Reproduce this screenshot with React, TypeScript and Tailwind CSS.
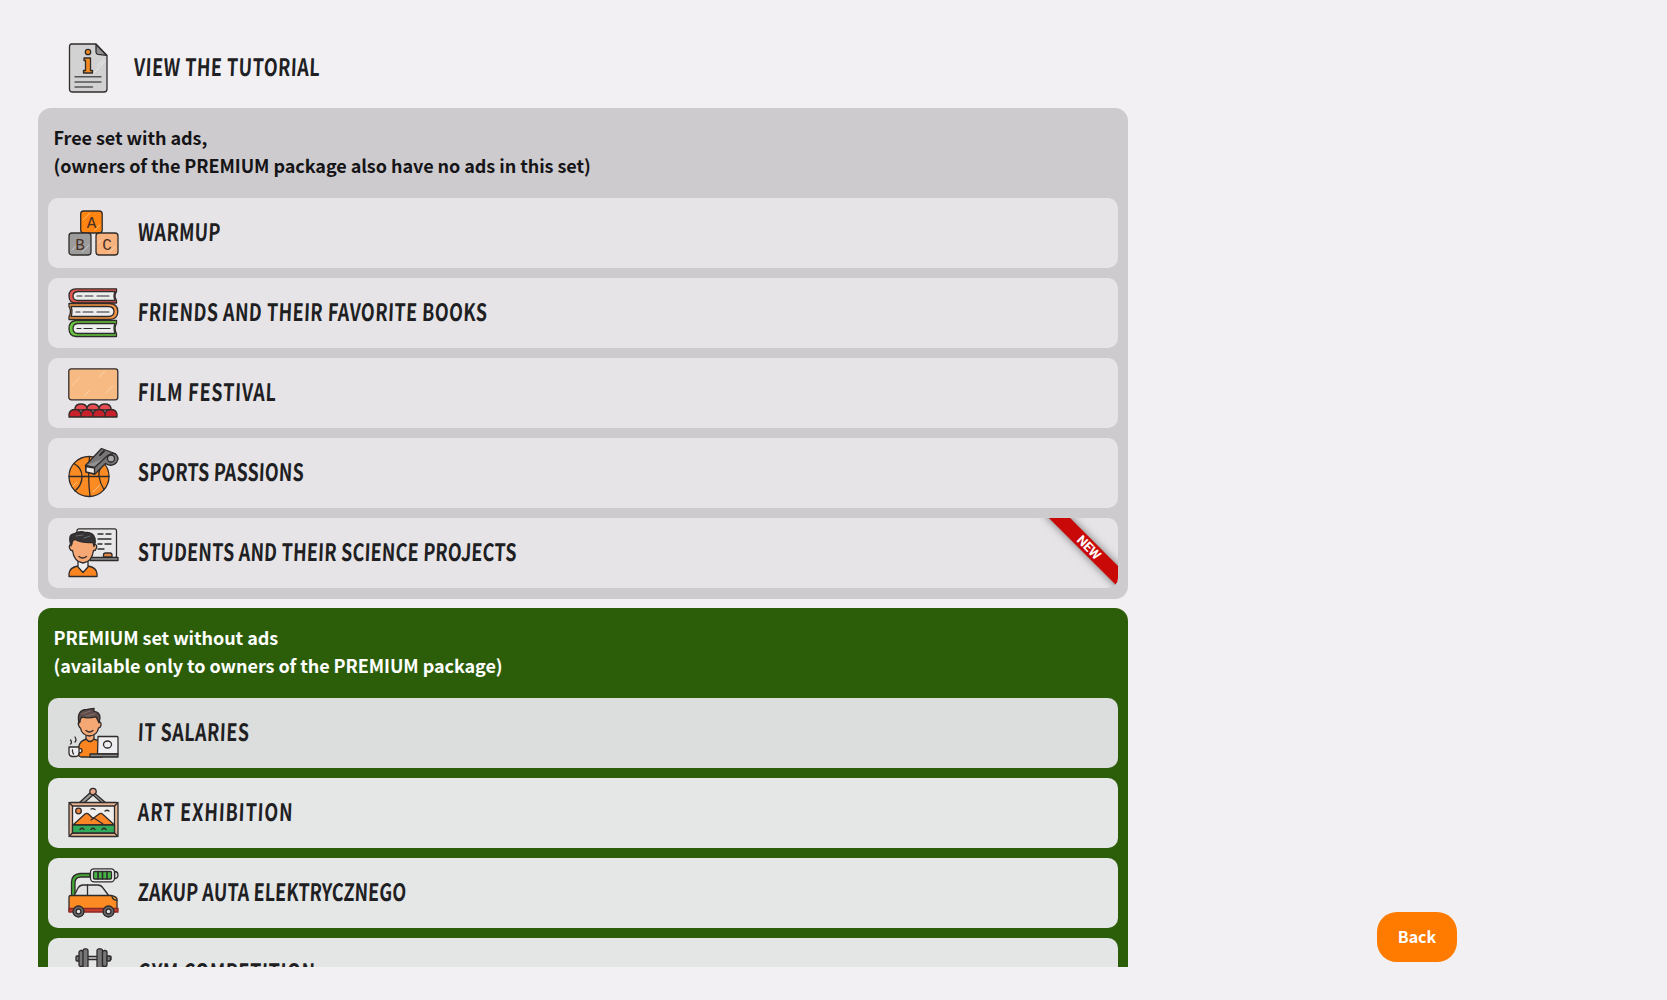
import type { ReactNode } from 'react';

interface LevelRow {
  title: string;
  tracking: string;
  icon: ReactNode;
  rowClass?: string;
  isNew?: boolean;
}

const INK = '#2f2b2b';

function Icon({ children }: { children: ReactNode }) {
  return (
    <svg
      viewBox="0 0 50 50"
      className="w-[50px] h-[50px] shrink-0 overflow-visible"
      fill="none"
      stroke={INK}
      strokeWidth="1.3"
      strokeLinecap="round"
      strokeLinejoin="round"
    >
      {children}
    </svg>
  );
}

const TutorialIcon = () => (
  <Icon>
    <path d="M8 .8 33 1l11 11.5V46q0 3-3 3H9.500q-3 0-3-3V4q0-3 2-3.200Z" fill="#d3d2d3" />
    <path d="M33 1.500V9q0 2 2 2.300l8.500 1Z" fill="#929193" />
    <path d="m31 30 11-12M34 23l6-6" stroke="#ebeaeb" strokeWidth="1" />
    <circle cx="25" cy="9" r="2.700" fill="#f28a22" />
    <path d="M21 15h6.500v12.500H29.500V30h-9v-2.500h2V17.500H21Z" fill="#f28a22" />
    <path d="M12 33.800h26M12 39h26M12 44h17.500" stroke="#555" strokeWidth="1.400" />
  </Icon>
);

const BlocksIcon = () => (
  <Icon>
    <rect x="12.700" y="3" width="21.500" height="22" rx="3" fill="#ff8510" />
    <rect x="1" y="25" width="22" height="22" rx="3" fill="#9c9c9c" />
    <rect x="28" y="25" width="22" height="22" rx="3" fill="#f8b27d" />
    <path d="m15 12 7-7M27 22l5-5M4 42l6-6M14 44l7-7M33 32l-3 3M41 45l6-6" stroke="#fff" strokeOpacity=".4" strokeWidth="1" />
    <g
      stroke="none"
      fill="#493126"
      textAnchor="middle"
      className="font-['Liberation_Mono',monospace] text-[16px]"
    >
      <text x="23.500" y="19.500">A</text>
      <text x="12" y="41.500">B</text>
      <text x="39" y="41.500">C</text>
    </g>
  </Icon>
);

const BooksIcon = () => (
  <Icon>
    <path d="M48.500.8H8Q1 1 1 7.700 1 15 8 15h40.500v-2.500q-3-5 0-9Z" fill="#e45750" />
    <path d="M47 3.500H9.500Q5 4 5 8t4.500 4.500H47q-2-5 0-9Z" fill="#eee" />
    <path d="M1 15.500h40q8.800 0 8.800 8t-8.800 8H1v-3q3-5 0-10Z" fill="#f59645" />
    <path d="M3 18.500h37.500q5.500.3 5.500 5t-5.500 5H3q2-5 0-10Z" fill="#eee" />
    <path d="M48.500 32.500H8q-7 .5-7 8t7 8h40.500v-3q-3-5 0-10Z" fill="#66c83c" />
    <path d="M47 35.500H9.500q-4.500.5-4.500 5t4.500 5H47q-2-5 0-10Z" fill="#eee" />
    <path d="M9 8h5m3 0h8m4 0h12M8 24h4m3 0h10m4 0h12M9 40.500h4m3 0h8m5 0h13" strokeWidth="1.200" />
  </Icon>
);

const CinemaIcon = () => (
  <Icon>
    <rect x=".8" y=".8" width="49" height="31" rx="2.500" fill="#f8ba83" />
    <path d="m4 17 8-8M31 9l6-6M16 28l6-6M38 25l7-7" stroke="#fbd1aa" strokeWidth="1" />
    <g fill="#e54b50">
      <path d="M7 42v-2q1-4 6-4t6 4v2ZM19 42v-2q1-4 6-4t6 4v2ZM31 42v-2q1-4 6-4t6 4v2Z" />
    </g>
    <g fill="#c8202a">
      <path d="M1 49v-3q1-4.500 6-4.500t6 4.500v3ZM13 49v-3q1-4.500 6-4.500t6 4.500v3ZM25 49v-3q1-4.500 6-4.500t6 4.500v3ZM37 49v-3q1-4.500 6-4.500t6 4.500v3Z" />
    </g>
  </Icon>
);

const SportIcon = () => (
  <Icon>
    <circle cx="21" cy="28.500" r="20" fill="#fb8b22" />
    <path d="M1 28.500h40M21.500 9q-2 19 .5 39.500M6 15.500q8 4.500 8 13T7 43M36 15.500q-6 6-5 13t5 13" />
    <path d="m5 38 4-4M25 44l7-7" stroke="#ffc180" strokeWidth="1" />
    <path d="M17.500 17.500 33.500.500 47 5.500q5 4 1.500 9-4.500 5-11 1L27 26l-9-2Z" fill="#777576" />
    <path d="m17.500 17.500 9 2 11-10q5-5 10-3.500" fill="#929090" />
    <path d="M18 18.500 26.500 20v6L18 24Z" fill="#eee9e5" />
    <circle cx="43" cy="10.500" r="3.500" fill="#aaa" />
    <path d="m32 7 4-4" strokeWidth="2" />
  </Icon>
);

const StudentIcon = () => (
  <Icon>
    <rect x="9" y=".8" width="39.500" height="29" rx="2" fill="#e9e8e9" />
    <path d="M22 29.500h28v3H22Z" fill="#929292" />
    <path d="M30 6h5m3 0h5M30 11h13M30 16h4m3 0h6M30 21h6" />
    <path d="M35.500 29v-2q0-2 2-2h4.500q2 0 2 2v2Z" fill="#df8744" />
    <path d="M1 48.500v-3q.5-6 9-7.500l5 4 5-4q8.500 1.500 9 7.500v3Z" fill="#fa8420" />
    <path d="M10 33v6l5 5.500 5-5.500v-6" fill="#eee" />
    <path d="M4 10v6q-3.500.5-2.500 4 1 3 3 2.500Q6 34 15 35q9-1 10.500-12.500 2 .5 3-2.500t-2-4v-6Z" fill="#f5a873" />
    <path d="M3 18Q-.5 7 5.500 6q6-4 12-1.500 8-.5 9.500 6 1 4-1 8l-1-4q-10 1-18-3Q3.500 12 3 18Z" fill="#353335" />
    <path d="m8 8 7-1m1 3 6-2" stroke="#777" strokeWidth=".8" />
    <path d="M11 28.500q3.500 3 7.500 0" />
  </Icon>
);

const SalaryIcon = () => (
  <Icon>
    <path d="M11 48q-3-15 8-17h6q9 1 9 12v6H13Z" fill="#fa8420" />
    <path d="M18 27v4q4 5 8 0v-4" fill="#f5a873" />
    <path d="M12 8v6q-2.500 0-1.500 3t2 3q1 7 9 8 8-1 9-8 2 0 2.500-3T31 14V8Z" fill="#f5a873" />
    <path d="M11 15Q8 2 19 1.500l7-1.200v3q6 .5 6 6.500l-1 5-3-6q-8 2-14 .2Q12 11 11 15Z" fill="#5e4d49" />
    <path d="m14 6 8-3m-4 5 9-2" stroke="#8b7771" strokeWidth=".8" />
    <path d="M18 22.500q3.500 3 7 0" />
    <path d="M30 28.500h19q1 0 1 1V46H29.500Z" fill="#eeedef" />
    <path d="M22 46h28v3H22Z" fill="#888" />
    <ellipse cx="39.500" cy="36.500" rx="4" ry="3.500" />
    <path d="M1 39h10v6q0 3.500-4 3.500H4Q1 48 1 45ZM11 41q3-1 3 1.500T11 45" fill="#eeedef" />
    <path d="M2.500 36q2-1.500 0-4M7 34q2-2 0-5M4.500 42q-.5 2 1 4" />
  </Icon>
);

const ArtIcon = () => (
  <Icon>
    <path d="M11 15 24 3l14 12h-4L25 7l-9 8Z" fill="#999" />
    <circle cx="25" cy="3.500" r="3.200" fill="#e8a889" />
    <rect x="1" y="14.500" width="49" height="34" rx="2" fill="#e4b391" />
    <path d="M4.500 18h42v27h-42Z" fill="#f0eeec" />
    <circle cx="10.500" cy="23" r="2.800" fill="#eb843f" />
    <path d="m5 37 12-11q2-1.500 4 .5l4 4 6-4.500q2-1.500 4 .5L46.500 37Z" fill="#fc8525" />
    <path d="M4.500 37h42v8h-42Z" fill="#31ab59" />
    <path d="m1 14.500 3.500 3.500M50 14.500 46.500 18M1 48.500 4.500 45M50 48.500 46.500 45M23 21q2-1 4 .5M37 23q2-1.500 4 0M12 41.500q2-2.500 4 0m7 0q2-2.500 4 0m7 0q2-2.500 4 0" />
    <path d="m23 32 3-2 9 6" />
  </Icon>
);

const CarIcon = () => (
  <Icon>
    <path d="M22 5.500H12Q3.500 6.500 3.500 14v16H7V15q0-6 6-6h9Z" fill="#45a735" />
    <path d="M46.500 3.500q3.500 0 3.500 3.500t-3.500 3.500Z" fill="#d8d8d8" />
    <rect x="22.500" y=".8" width="24" height="13" rx="3.500" fill="#efeeee" />
    <rect x="25.500" y="3.500" width="18" height="7.500" rx="1" fill="#45b343" />
    <path d="M30 3.500V11M34.500 3.500V11M39 3.500V11" strokeWidth="1.600" />
    <path d="m6 28 4-8q2-3 5-3h15q3 0 5 3l6 8Z" fill="#e2e2e3" />
    <path d="M19.500 17v11" />
    <path d="M1 29q0-1.500 2-1.500h40q6 1 6 4V43H1Z" fill="#fd8b24" />
    <path d="M1 40.500h49V44H1Z" fill="#c83c32" stroke="#8a2a22" />
    <path d="M44 28.500q1 4 5 3.500" fill="#f3d65b" />
    <circle cx="10.500" cy="43.500" r="5.500" fill="#666" />
    <circle cx="10.500" cy="43.500" r="2.400" fill="#e5e3e3" />
    <circle cx="40.500" cy="43.500" r="5.500" fill="#666" />
    <circle cx="40.500" cy="43.500" r="2.400" fill="#e5e3e3" />
  </Icon>
);

const GymIcon = () => (
  <Icon>
    <path d="M9 8.500h34v3H9Z" fill="#d2d3d4" />
    <g fill="#777">
      <rect x="8" y="8" width="3.500" height="5" rx="1" />
      <rect x="11" y="2.500" width="4.500" height="16" rx="2" />
      <rect x="15" y=".8" width="5" height="20" rx="2" />
      <rect x="29" y=".8" width="5.500" height="20" rx="2" />
      <rect x="34.500" y="2.500" width="4.500" height="16" rx="2" />
      <rect x="39" y="8" width="3.500" height="5" rx="1" />
    </g>
  </Icon>
);

const freeLevels: LevelRow[] = [
  { title: 'WARMUP', tracking: 'tracking-[0.35px]', icon: <BlocksIcon /> },
  { title: 'FRIENDS AND THEIR FAVORITE BOOKS', tracking: 'tracking-[0.6px]', icon: <BooksIcon /> },
  { title: 'FILM FESTIVAL', tracking: 'tracking-[1.05px]', icon: <CinemaIcon /> },
  { title: 'SPORTS PASSIONS', tracking: 'tracking-[0.15px]', icon: <SportIcon /> },
  { title: 'STUDENTS AND THEIR SCIENCE PROJECTS', tracking: 'tracking-[0.28px]', icon: <StudentIcon />, isNew: true },
];

const premiumLevels: LevelRow[] = [
  { title: 'IT SALARIES', tracking: 'tracking-[0.64px]', icon: <SalaryIcon />, rowClass: 'bg-[#dcdddd]' },
  { title: 'ART EXHIBITION', tracking: 'tracking-[1.15px]', icon: <ArtIcon />, rowClass: 'bg-[#e5e6e6]' },
  { title: 'ZAKUP AUTA ELEKTRYCZNEGO', tracking: 'tracking-[0.09px]', icon: <CarIcon />, rowClass: 'bg-[#e5e6e6]' },
  { title: 'GYM COMPETITION', tracking: 'tracking-[0.85px]', icon: <GymIcon />, rowClass: 'bg-[#e3e6e5]' },
];

function Title({ text, tracking }: { text: string; tracking: string }) {
  return (
    <span
      className={`inline-block origin-left scale-x-[0.75] -skew-x-3 whitespace-nowrap font-['Noto_Sans_CJK_SC',sans-serif] text-[24px] leading-[30px] font-bold text-[#202023] ${tracking}`}
    >
      {text}
    </span>
  );
}

function Level({ title, tracking, icon, rowClass = 'bg-[#e6e4e6]', isNew }: LevelRow) {
  return (
    <div className={`relative flex h-[70px] shrink-0 items-center gap-5 overflow-hidden rounded-[10px] pl-5 ${rowClass}`}>
      {icon}
      <div className="pb-[5px]">
        <Title text={title} tracking={tracking} />
      </div>
      {isNew && (
        <div className="absolute top-[22px] -right-[26px] w-[110px] h-[15px] rotate-45 bg-[#c90808] text-center font-['Roboto',sans-serif] text-[13px] leading-[15px] font-bold text-white shadow-[0_0_8px_rgba(0,0,0,0.5)]">
          NEW
        </div>
      )}
    </div>
  );
}

export default function App() {
  return (
    <div className="flex h-[1000px] w-full overflow-hidden bg-[#f2f0f3] font-['Noto_Sans_CJK_SC',sans-serif]">
      <div className="ml-[38px] mt-[33px] h-[934px] w-[1090px] shrink-0 overflow-hidden">
        <div className="flex h-[75px] items-start gap-[21px] pt-[10px] pl-[25px]">
          <TutorialIcon />
          <div className="pt-[8px]">
            <Title text="VIEW THE TUTORIAL" tracking="tracking-[0.63px]" />
          </div>
        </div>

        <section className="flex flex-col gap-[10px] rounded-[13px] bg-[#cdcbce] px-[10px] pb-[11px]">
          <h2 className="h-[80px] pt-[16px] pl-[5.5px] text-[18px] leading-[27.500px] font-bold tracking-[-0.06px] text-[#151416]">
            Free set with ads,
            <br />
            (owners of the PREMIUM package also have no ads in this set)
          </h2>
          {freeLevels.map((level) => (
            <Level key={level.title} {...level} />
          ))}
        </section>

        <section className="mt-[9px] flex flex-col gap-[10px] rounded-[13px] bg-[#2c5e0a] px-[10px] pb-[11px]">
          <h2 className="h-[80px] pt-[16px] pl-[5.5px] text-[18px] leading-[27.500px] font-bold tracking-[-0.06px] text-white">
            PREMIUM set without ads
            <br />
            (available only to owners of the PREMIUM package)
          </h2>
          {premiumLevels.map((level) => (
            <Level key={level.title} {...level} />
          ))}
        </section>
      </div>

      <div className="flex flex-1 items-end justify-end pr-[210px] pb-[38px]">
        <button className="h-[50px] w-20 rounded-[20px] bg-[#ff7b00] pb-[2px] text-[16px] font-bold text-white">
          Back
        </button>
      </div>
    </div>
  );
}
